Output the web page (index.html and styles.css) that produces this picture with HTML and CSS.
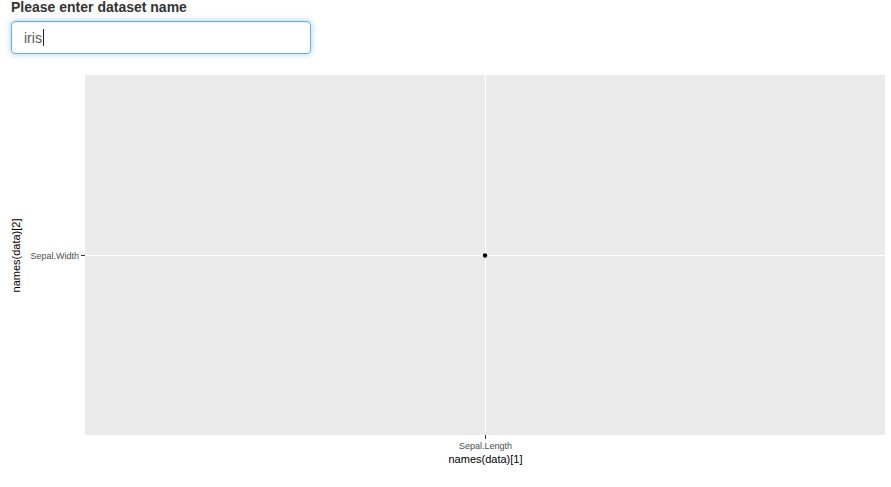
FILE: index.html
```html
<!DOCTYPE html>
<html lang="en">
<head>
    <meta charset="UTF-8">
    <title>Dataset plot</title>
    <link rel="stylesheet" href="styles.css">
</head>
<body>
    <div class="page">
        <div class="form-group">
            <label class="control-label" for="dataset">Please enter dataset name</label>
            <div class="form-control" id="dataset">iris<span class="caret"></span></div>
        </div>
        <div class="plot">
            <svg width="891" height="420" viewBox="0 62 891 420">
                <!-- panel -->
                <rect x="85" y="75" width="800" height="360" fill="#ebebeb"/>
                <line x1="85" y1="255.5" x2="885" y2="255.5" stroke="#fff" stroke-width="1.1"/>
                <line x1="485.5" y1="75" x2="485.5" y2="435" stroke="#fff" stroke-width="1.1"/>
                <circle cx="485" cy="255.5" r="2.2" fill="#000"/>
                <!-- axes -->
                <line x1="81" y1="255.5" x2="85" y2="255.5" stroke="#333" stroke-width="1"/>
                <line x1="485.5" y1="435" x2="485.5" y2="439" stroke="#333" stroke-width="1"/>
                <text class="tick" x="79" y="258.5" text-anchor="end">Sepal.Width</text>
                <text class="tick" x="485.5" y="448.5" text-anchor="middle">Sepal.Length</text>
                <text class="axis-title" x="485.5" y="463" text-anchor="middle">names(data)[1]</text>
                <text class="axis-title" transform="translate(19.5 255.5) rotate(-90)" text-anchor="middle">names(data)[2]</text>
            </svg>
        </div>
    </div>
</body>
</html>
```

FILE: styles.css
```css
* {
    margin: 0;
    padding: 0;
    box-sizing: border-box;
}
body {
    font-family: 'Liberation Sans', Arial, sans-serif;
    font-size: 14px;
    color: #333;
    background: #fff;
}
.page {
    padding-left: 11px;
}
.form-group {
    width: 300px;
}
.control-label {
    display: block;
    font-weight: bold;
    line-height: 14px;
    margin-bottom: 7px;
}
.form-control {
    height: 33px;
    padding: 6px 12px;
    line-height: 20px;
    color: #555;
    border: 1px solid #66afe9;
    border-radius: 4px;
    box-shadow: inset 0 1px 1px rgba(0, 0, 0, .075), 0 0 6px rgba(102, 175, 233, .6);
}
.caret {
    display: inline-block;
    width: 1px;
    height: 17px;
    background: #222;
    vertical-align: -3px;
    margin-left: 1px;
}
.plot {
    margin-left: -11px;
    margin-top: 8px;
}
.plot svg {
    display: block;
}
.tick {
    font-family: 'Liberation Sans', Arial, sans-serif;
    font-size: 9px;
    fill: #4d4d4d;
}
.axis-title {
    font-family: 'Liberation Sans', Arial, sans-serif;
    font-size: 11px;
    fill: #000;
}
```
